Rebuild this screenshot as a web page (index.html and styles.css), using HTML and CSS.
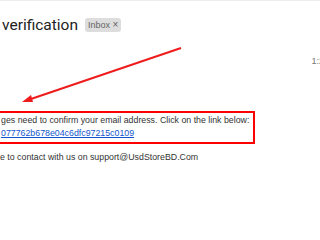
FILE: index.html
```html
<!DOCTYPE html>
<html lang="en">

<head>
    <meta charset="UTF-8">
    <meta name="viewport" content="width=device-width, initial-scale=1.0">
    <title>Email verification</title>
    <link rel="stylesheet" href="styles.css">
</head>

<body>
    <div class="mail">
        <div class="subject">
            <h1>verification</h1>
            <span class="label">Inbox <span class="label-x">&times;</span></span>
        </div>

        <div class="meta">
            <span class="time">1:2</span>
        </div>

        <div class="message">
            <div class="highlight">
                <p>ges need to confirm your email address. Click on the link below:</p>
                <a href="#" class="verify-link">077762b678e04c6dfc97215c0109</a>
            </div>
            <p class="contact">e to contact with us on support@UsdStoreBD.Com</p>
        </div>

        <svg class="arrow" width="320" height="240" viewBox="0 0 320 240">
            <line x1="181" y1="47" x2="28" y2="99" stroke="#ee1c1c" stroke-width="2" />
            <polygon points="22,101 31,94 33,101" fill="#ee1c1c" />
        </svg>
    </div>
</body>

</html>
```

FILE: styles.css
```css
body {
    margin: 0;
    background-color: white;
    overflow: hidden;
}

.mail {
    position: relative;
    width: 320px;
    height: 240px;
    border-top: 1px solid #eeeeee;
    box-sizing: border-box;
}

.subject {
    display: flex;
    align-items: center;
    gap: 7px;
    padding: 14px 0 0 2px;
    height: 20px;
}

.subject h1 {
    margin: 0;
    font-family: Roboto, sans-serif;
    font-weight: 400;
    font-size: 15.5px;
    color: #222222;
}

.label {
    background-color: #dddddd;
    color: #666666;
    font-family: "Liberation Sans", Arial, sans-serif;
    font-size: 9px;
    line-height: 11px;
    padding: 1px 3px;
    border-radius: 3px;
}

.label-x {
    font-size: 10px;
}

.meta {
    display: flex;
    justify-content: flex-end;
    margin-top: 21px;
    margin-right: -4px;
}

.time {
    font-family: "Liberation Sans", Arial, sans-serif;
    font-size: 9px;
    color: #777777;
}

.message {
    margin-top: 45px;
    font-family: "Liberation Sans", Arial, sans-serif;
    font-size: 8.8px;
    color: #333333;
    white-space: nowrap;
}

.message p {
    margin: 0;
}

.highlight {
    width: 259px;
    margin-left: -4px;
    padding: 1px 0 2px 3px;
    border: 2px solid #ff0000;
    line-height: 13px;
    box-sizing: border-box;
}

.verify-link {
    color: #1155cc;
}

.contact {
    margin-top: 8px !important;
}

.arrow {
    position: absolute;
    left: 0;
    top: 0;
}
```
